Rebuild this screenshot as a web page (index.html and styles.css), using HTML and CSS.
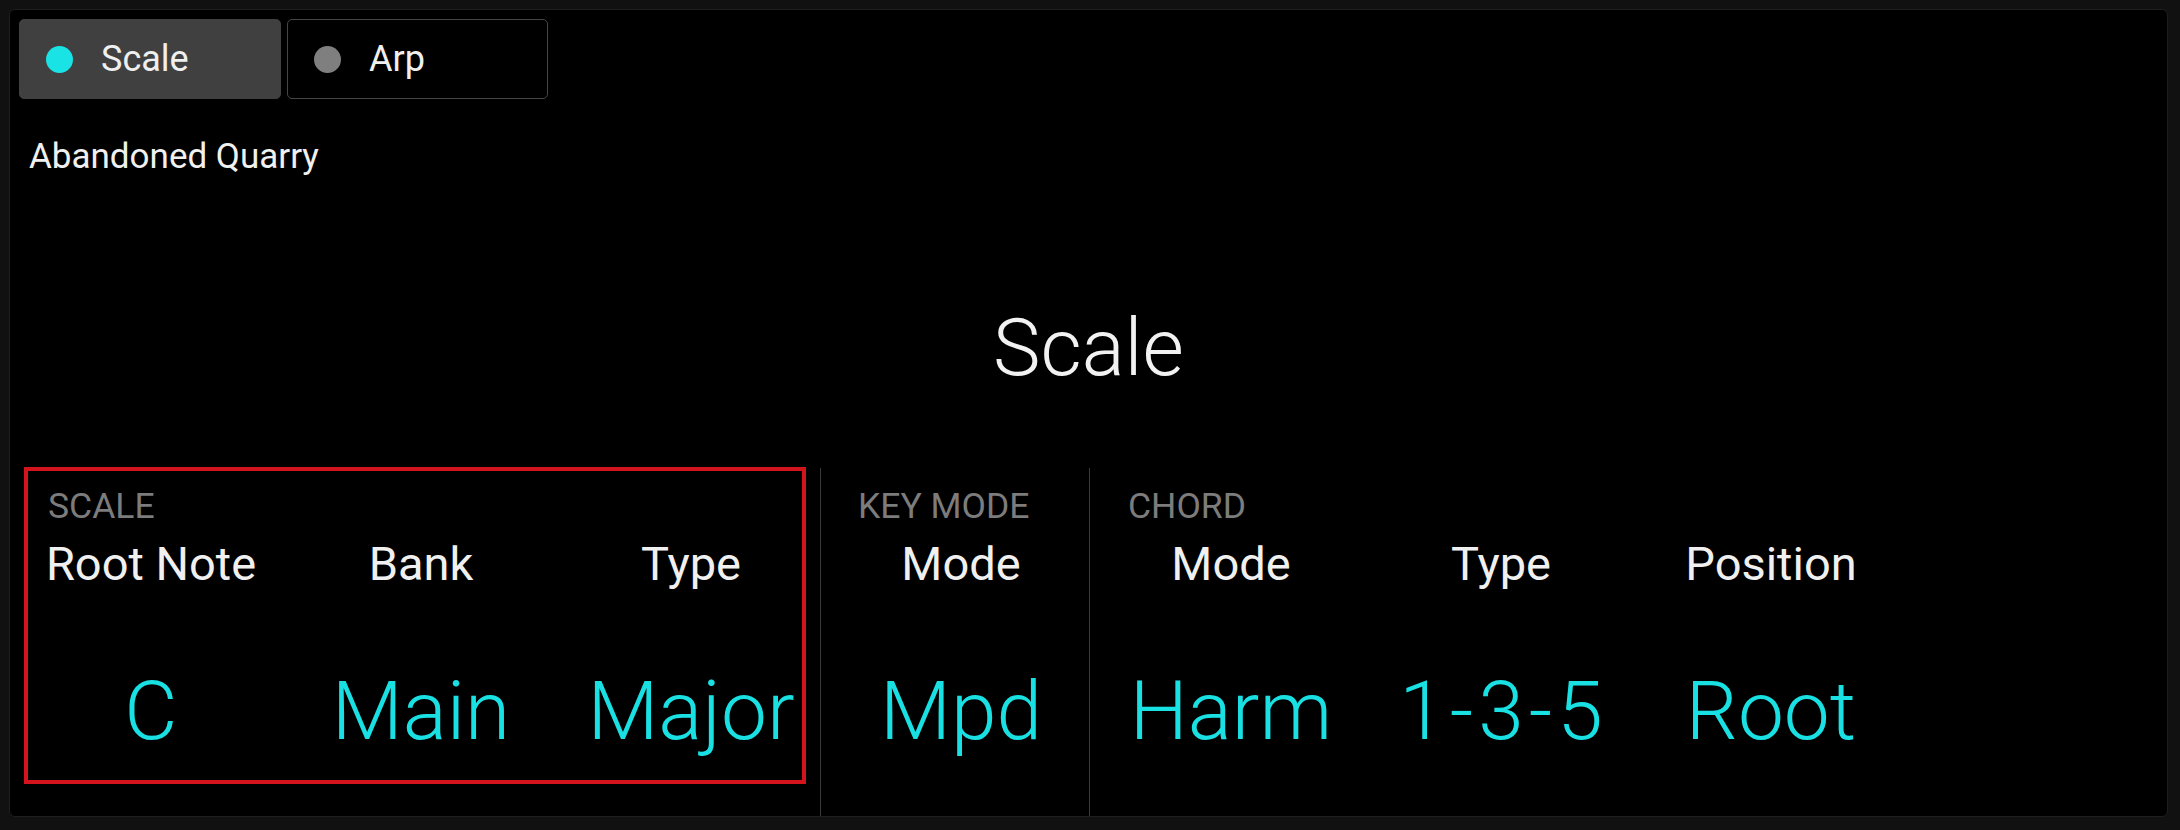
FILE: index.html
```html
<!DOCTYPE html>
<html lang="en">
<head>
<meta charset="utf-8">
<title>Scale</title>
<link rel="stylesheet" href="styles.css">
</head>
<body>
<div class="panel">
  <div class="tabs">
    <div class="tab tab-active"><span class="dot dot-on"></span><span class="tab-label">Scale</span></div>
    <div class="tab"><span class="dot dot-off"></span><span class="tab-label">Arp</span></div>
  </div>
  <div class="preset">Abandoned Quarry</div>
  <div class="title">Scale</div>
  <div class="sections">
    <div class="section section-scale">
      <div class="highlight"></div>
      <div class="section-label">SCALE</div>
      <div class="cols">
        <div class="col"><div class="param">Root Note</div><div class="value">C</div></div>
        <div class="col"><div class="param">Bank</div><div class="value">Main</div></div>
        <div class="col"><div class="param">Type</div><div class="value">Major</div></div>
      </div>
    </div>
    <div class="section section-key">
      <div class="section-label">KEY MODE</div>
      <div class="cols">
        <div class="col col-narrow"><div class="param">Mode</div><div class="value">Mpd</div></div>
      </div>
    </div>
    <div class="section section-chord">
      <div class="section-label">CHORD</div>
      <div class="cols">
        <div class="col"><div class="param">Mode</div><div class="value">Harm</div></div>
        <div class="col"><div class="param">Type</div><div class="value value-spaced">1-3-5</div></div>
        <div class="col"><div class="param">Position</div><div class="value">Root</div></div>
      </div>
    </div>
  </div>
</div>
</body>
</html>
```
FILE: styles.css
```css
* { box-sizing: border-box; }
html, body { margin: 0; height: 100%; }
body {
  background: #111111;
  padding: 9px 12px 13px 9px;
  font-family: Roboto, "Noto Sans", "Liberation Sans", sans-serif;
  color: #f0f0f0;
}
.panel {
  height: 808px;
  background: #000;
  border: 1px solid #1e1e1e;
  border-radius: 6px;
  display: flex;
  flex-direction: column;
}
.tabs {
  display: flex;
  gap: 6px;
  padding: 9px 0 0 9px;
}
.tab {
  width: 261px;
  height: 80px;
  border: 1px solid #464646;
  border-radius: 5px;
  display: flex;
  align-items: center;
  padding-left: 26px;
  gap: 28px;
}
.tab-active {
  background: #404040;
  border-color: #404040;
  width: 262px;
}
.dot {
  width: 27px;
  height: 27px;
  border-radius: 50%;
  flex: none;
}
.dot-on { background: #1ae3e6; }
.dot-off { background: #7f7f7f; }
.tab-label {
  font-size: 36px;
  line-height: 40px;
  color: #efefef;
}
.preset {
  margin-top: 38px;
  padding-left: 19px;
  font-size: 35px;
  line-height: 40px;
  color: #f0f0f0;
}
.title {
  margin-top: 121px;
  text-align: center;
  font-size: 80px;
  font-weight: 300;
  line-height: 100px;
  color: #f2f2f2;
}
.sections {
  margin-top: 70px;
  flex: 1;
  display: flex;
}
.section {
  position: relative;
  border-right: 1px solid #3a3a3a;
  padding-top: 18px;
}
.section-scale { width: 811px; }
.section-key { width: 269px; }
.section-chord { border-right: none; flex: 1; }
.highlight {
  position: absolute;
  left: 14px;
  right: 14px;
  top: -1px;
  bottom: 32px;
  border: 4px solid #d3141c;
  pointer-events: none;
}
.section-label {
  padding-left: 38px;
  font-size: 35.5px;
  line-height: 40px;
  color: #7c7c7c;
}
.section-key .section-label { padding-left: 37px; }
.cols {
  display: flex;
  margin-top: 11px;
}
.col {
  width: 270px;
  padding-left: 12px;
  text-align: center;
  white-space: nowrap;
}
.col-narrow { width: 268px; }
.param {
  font-size: 47px;
  line-height: 54px;
  color: #f0f0f0;
}
.value {
  margin-top: 72px;
  font-size: 82px;
  font-weight: 300;
  line-height: 96px;
  color: #19e0e3;
}
.value-spaced {
  letter-spacing: 5px;
  text-indent: 5px;
}
```
